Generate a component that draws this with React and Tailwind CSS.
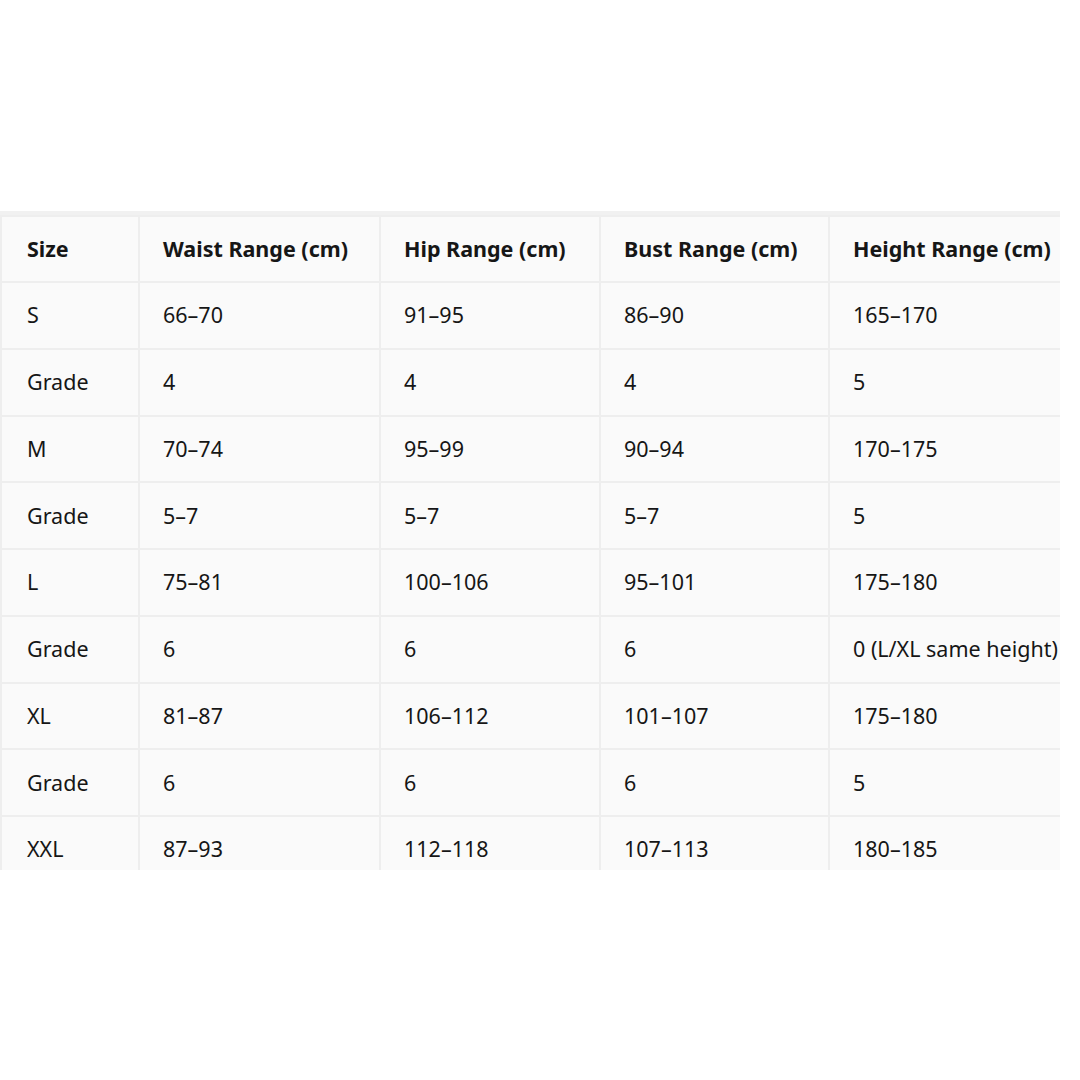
import React from 'react';

const headers = ['Size', 'Waist Range (cm)', 'Hip Range (cm)', 'Bust Range (cm)', 'Height Range (cm)'];

const rows = [
    ['S', '66–70', '91–95', '86–90', '165–170'],
    ['Grade', '4', '4', '4', '5'],
    ['M', '70–74', '95–99', '90–94', '170–175'],
    ['Grade', '5–7', '5–7', '5–7', '5'],
    ['L', '75–81', '100–106', '95–101', '175–180'],
    ['Grade', '6', '6', '6', '0 (L/XL same height)'],
    ['XL', '81–87', '106–112', '101–107', '175–180'],
    ['Grade', '6', '6', '6', '5'],
    ['XXL', '87–93', '112–118', '107–113', '180–185'],
];

const widths = ['w-[138px]', 'w-[241px]', 'w-[220px]', 'w-[229px]', 'w-[260px]'];

const App = () => {
    return (
        <div className="w-[1080px] h-[1080px] bg-white pt-[211px]" style={{ fontFamily: '"Noto Sans", "Open Sans", sans-serif' }}>
            {/* Size chart, clipped on the right and bottom like the screenshot */}
            <div className="w-[1060px] h-[659px] overflow-hidden border-t-4 border-[#f1f1f1]">
                <table className="table-fixed border-collapse w-[1088px] bg-[#fafafa] text-[21.5px] text-[#161616]">
                    <thead>
                        <tr className="h-[66px]">
                            {headers.map((h, i) => (
                                <th key={h} className={`${widths[i]} border-2 border-[#eeeeee] pl-[23px] first:pl-[25px] text-left font-bold whitespace-nowrap`}>
                                    {h}
                                </th>
                            ))}
                        </tr>
                    </thead>
                    <tbody>
                        {rows.map((row, r) => (
                            <tr key={r} className="h-[66.75px]">
                                {row.map((cell, c) => (
                                    <td key={c} className="border-2 border-[#eeeeee] pl-[23px] first:pl-[25px] text-left whitespace-nowrap">
                                        {cell}
                                    </td>
                                ))}
                            </tr>
                        ))}
                    </tbody>
                </table>
            </div>
        </div>
    );
};

export default App;
